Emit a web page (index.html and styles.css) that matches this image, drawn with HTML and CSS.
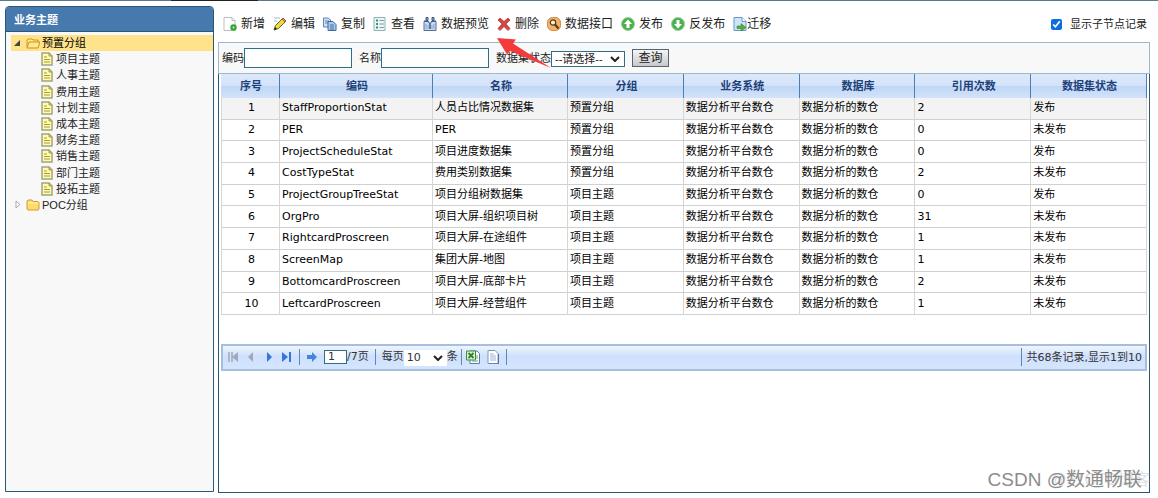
FILE: index.html
```
<!DOCTYPE html>
<html lang="zh-CN">
<head>
<meta charset="utf-8">
<title>业务主题</title>
<link rel="stylesheet" href="styles.css">
</head>
<body>
<svg class="defs" aria-hidden="true">
  <symbol id="doc" viewBox="0 0 12 14"><path d="M1 1h7l3 3v9H1z" fill="#fffbb0" stroke="#a3a47c" stroke-width="1.5"/><path d="M8 1v3h3M3 5h3M3 7.500h6M3 10h6" fill="none" stroke="#a59a3c"/></symbol>
</svg>
<div class="topline"><span></span></div>
<div class="app">
  <aside class="sidebar">
    <h1 class="side-title">业务主题</h1>
    <ul class="tree">
      <li class="node root selected"><svg class="twist" viewBox="0 0 7 7"><path d="M6 0v6H0z" fill="#444"/></svg><svg class="folder" viewBox="0 0 14 12"><path d="M1 10V3l1-1h4l1 1h5v2M1 11l2-6h11l-2 6z" fill="#ffe98c" stroke="#c9921d"/></svg><span>预置分组</span></li>
      <li class="node leaf"><svg class="doc"><use href="#doc"/></svg><span>项目主题</span></li>
      <li class="node leaf"><svg class="doc"><use href="#doc"/></svg><span>人事主题</span></li>
      <li class="node leaf"><svg class="doc"><use href="#doc"/></svg><span>费用主题</span></li>
      <li class="node leaf"><svg class="doc"><use href="#doc"/></svg><span>计划主题</span></li>
      <li class="node leaf"><svg class="doc"><use href="#doc"/></svg><span>成本主题</span></li>
      <li class="node leaf"><svg class="doc"><use href="#doc"/></svg><span>财务主题</span></li>
      <li class="node leaf"><svg class="doc"><use href="#doc"/></svg><span>销售主题</span></li>
      <li class="node leaf"><svg class="doc"><use href="#doc"/></svg><span>部门主题</span></li>
      <li class="node leaf"><svg class="doc"><use href="#doc"/></svg><span>投拓主题</span></li>
      <li class="node root"><svg class="twist" viewBox="0 0 7 7"><path d="M2 0l4 3.500-4 3.500z" fill="#fff" stroke="#aaa"/></svg><svg class="folder" viewBox="0 0 14 12"><path d="M1 10V2l1-1h4l1 1.500h5l1 1V10l-1 1H2z" fill="#ffdc6b" stroke="#d09b2b"/><path d="M2 4h10" stroke="#fff3bd"/></svg><span>POC分组</span></li>
    </ul>
  </aside>
  <main class="main">
    <div class="toolbar">
      <button class="tool"><svg viewBox="0 0 14 14"><path d="M1 .5h8l3 3v10H1z" fill="#fff" stroke="#b9bdc4"/><path d="M9 .5v3h3" fill="#eee" stroke="#b9bdc4"/><circle cx="10.500" cy="10.500" r="3.200" fill="#35a536"/><path d="M10.500 9.500v2M9.500 10.500h2" stroke="#b8f0a8"/></svg>新增</button>
      <button class="tool"><svg viewBox="0 0 14 14"><path d="M1 1h6M1 4h3" stroke="#a8bbd0"/><path d="M1 13l1.500-4.500L10 1l3 3-7.500 7.500z" fill="#e6e03a" stroke="#67651f"/><path d="M9 2l1-1 3 3-1 1z" fill="#ef8b64" stroke="#a55"/><path d="M1 13l1-3 2 2z" fill="#222"/></svg>编辑</button>
      <button class="tool"><svg viewBox="0 0 14 14"><path d="M.5 1h5l2 2v7h-7z" fill="#cfe0f6" stroke="#6485ad"/><path d="M2 4h4M2 6h4" stroke="#6485ad"/><path d="M5 4.500h5l3 3v6H5z" fill="#a9c9ef" stroke="#3f699e"/><path d="M7 8h4M7 10h4M7 12h4" stroke="#456fa4"/></svg>复制</button>
      <button class="tool"><svg viewBox="0 0 14 14"><path d="M1 .5h11v13H1z" fill="#edf6f6" stroke="#8fb2ba"/><path d="M3 3.500h2M3 7h2M3 10.500h2" stroke="#2e9b61" stroke-width="2"/><path d="M6.500 3.500H11M6.500 7H11M6.500 10.500H11" stroke="#8399ad"/></svg>查看</button>
      <button class="tool"><svg viewBox="0 0 14 14"><path d="M1 4.500h12v9H1z" fill="#c9daf2" stroke="#566c94"/><path d="M3 .5h2v3H3zM9 .5h2v3H9z" fill="#8fa5cb" stroke="#3c5687"/><path d="M1 4l4 0 2 3 2-3h4" fill="#e7f1ff" stroke="#3c5687"/><path d="M3 7v5M5 8v4M9 8v4M11 7v5" stroke="#8aa6d2"/><path d="M7 7v5" stroke="#3c5687" stroke-width="1.500"/></svg>数据预览</button>
      <button class="tool"><svg viewBox="0 0 14 14"><path d="M1 3l2-2 4 3.500L11 1l2 2-4 4 4 4.500-2 2L7 9.500 3 13.500l-2-2L5 7z" fill="#d94744" stroke="#a62929" stroke-width=".7"/></svg>删除</button>
      <button class="tool"><svg viewBox="0 0 14 14"><rect x=".5" y=".5" width="13" height="13" rx="5" fill="#f4b269" stroke="#cf8848"/><circle cx="6" cy="5.500" r="2.700" fill="#fff0d4" stroke="#583718" stroke-width="1.200"/><path d="M8 7.500l3.500 4" stroke="#583718" stroke-width="2"/></svg>数据接口</button>
      <button class="tool"><svg viewBox="0 0 14 14"><circle cx="7" cy="7" r="6.500" fill="#4caf50" stroke="#98d298"/><path d="M7 2.500L11 7H8.500v4h-3V7H3z" fill="#fff"/></svg>发布</button>
      <button class="tool"><svg viewBox="0 0 14 14"><circle cx="7" cy="7" r="6.500" fill="#4caf50" stroke="#98d298"/><path d="M7 11.500L3 7h2.500V3h3v4H11z" fill="#fff"/></svg>反发布</button>
      <button class="tool tight"><svg viewBox="0 0 14 14"><path d="M1 .5h8l4 4v9H1z" fill="#cde4fa" stroke="#6798cb"/><path d="M9 .5v4h4" fill="#fff" stroke="#6798cb"/><path d="M4 9h4V6.500l5 4-5 3.500v-2.500H4z" fill="#54ae3e" stroke="#3c8430" stroke-width=".6"/></svg>迁移</button>
      <label class="children"><input type="checkbox" checked>显示子节点记录</label>
    </div>
    <section class="content">
      <form class="search">
        <label class="field">编码<input type="text"></label>
        <label class="field">名称<input type="text"></label>
        <label class="field">数据集状态<span class="pick status"><select><option>--请选择--</option></select><svg viewBox="0 0 10 6"><path d="M1 1l4 4 4-4" fill="none" stroke="#222" stroke-width="2"/></svg></span></label>
        <button class="query" type="button">查询</button>
        <svg class="pointer" viewBox="0 0 54 32" aria-hidden="true"><path d="M0 1L19 2.500l-3 4L54 31 13 14l-3 3.500z" fill="#f43b3b"/></svg>
      </form>
      <div class="grid">
        <table>
          <colgroup><col class="c-no"><col class="c-code"><col class="c-name"><col><col><col><col><col></colgroup>
          <thead><tr><th>序号</th><th>编码</th><th>名称</th><th>分组</th><th>业务系统</th><th>数据库</th><th>引用次数</th><th>数据集状态</th></tr></thead>
          <tbody>
            <tr class="hover"><td>1</td><td>StaffProportionStat</td><td>人员占比情况数据集</td><td>预置分组</td><td>数据分析平台数仓</td><td>数据分析的数仓</td><td>2</td><td>发布</td></tr>
            <tr><td>2</td><td>PER</td><td>PER</td><td>预置分组</td><td>数据分析平台数仓</td><td>数据分析的数仓</td><td>0</td><td>未发布</td></tr>
            <tr><td>3</td><td>ProjectScheduleStat</td><td>项目进度数据集</td><td>预置分组</td><td>数据分析平台数仓</td><td>数据分析的数仓</td><td>0</td><td>发布</td></tr>
            <tr><td>4</td><td>CostTypeStat</td><td>费用类别数据集</td><td>预置分组</td><td>数据分析平台数仓</td><td>数据分析的数仓</td><td>2</td><td>未发布</td></tr>
            <tr><td>5</td><td>ProjectGroupTreeStat</td><td>项目分组树数据集</td><td>项目主题</td><td>数据分析平台数仓</td><td>数据分析的数仓</td><td>0</td><td>发布</td></tr>
            <tr><td>6</td><td>OrgPro</td><td>项目大屏-组织项目树</td><td>项目主题</td><td>数据分析平台数仓</td><td>数据分析的数仓</td><td>31</td><td>未发布</td></tr>
            <tr><td>7</td><td>RightcardProscreen</td><td>项目大屏-在途组件</td><td>项目主题</td><td>数据分析平台数仓</td><td>数据分析的数仓</td><td>1</td><td>未发布</td></tr>
            <tr><td>8</td><td>ScreenMap</td><td>集团大屏-地图</td><td>项目主题</td><td>数据分析平台数仓</td><td>数据分析的数仓</td><td>1</td><td>未发布</td></tr>
            <tr><td>9</td><td>BottomcardProscreen</td><td>项目大屏-底部卡片</td><td>项目主题</td><td>数据分析平台数仓</td><td>数据分析的数仓</td><td>2</td><td>未发布</td></tr>
            <tr><td>10</td><td>LeftcardProscreen</td><td>项目大屏-经营组件</td><td>项目主题</td><td>数据分析平台数仓</td><td>数据分析的数仓</td><td>1</td><td>未发布</td></tr>
          </tbody>
        </table>
        <div class="pager">
          <button class="nav" aria-label="首页"><svg viewBox="0 0 12 12"><path d="M2 1v10M5 1v10" stroke="#a3a8b8" stroke-width="1.500"/><path d="M11 1v10L5 6z" fill="#a3a8b8"/></svg></button>
          <button class="nav" aria-label="上一页"><svg viewBox="0 0 12 12"><path d="M8 1v10L3 6z" fill="#a3a8b8"/></svg></button>
          <button class="nav" aria-label="下一页"><svg viewBox="0 0 12 12"><path d="M4 1v10l5-5z" fill="#3775d6"/></svg></button>
          <button class="nav" aria-label="末页"><svg viewBox="0 0 12 12"><path d="M1 1v10l6-5z" fill="#3775d6"/><path d="M9 1v10" stroke="#3775d6" stroke-width="2"/></svg></button>
          <i class="sep"></i>
          <button class="nav go" aria-label="跳转"><svg viewBox="0 0 12 12"><path d="M1 4h5V1l5 5-5 5V8H1z" fill="#4385dc"/></svg></button>
          <label class="page"><input type="text" value="1" aria-label="页码">/7页</label>
          <i class="sep"></i>
          <label class="size">每页<span class="pick"><select aria-label="每页条数"><option>10</option></select><svg viewBox="0 0 10 6"><path d="M1 1l4 4 4-4" fill="none" stroke="#222" stroke-width="2"/></svg></span>条</label>
          <i class="sep"></i>
          <button class="nav export" aria-label="导出Excel"><svg viewBox="0 0 14 14"><path d="M4 1h7l2.500 2.500v10H4z" fill="#fff" stroke="#577faf"/><path d="M9 6h3M9 8h3M6 11h6" stroke="#7ca27c"/><path d="M.5 1h9v9h-9z" fill="#dff0d4" stroke="#3d8b3d"/><path d="M2.500 3l5 5M7.500 3l-5 5" stroke="#2c8230" stroke-width="1.800"/></svg></button>
          <button class="nav export" aria-label="导出文本"><svg viewBox="0 0 14 14"><path d="M2 .5h7l3 3v10H2z" fill="#fff" stroke="#7c96c0"/><path d="M4 4h4M4 6h6M4 8h6M4 10h6" stroke="#9eb2d3"/><path d="M12.500 4v10H3" fill="none" stroke="#56729e"/></svg></button>
          <i class="sep"></i>
          <span class="total">共68条记录,显示1到10</span>
        </div>
      </div>
    </section>
  </main>
</div>
<div class="mark ghost">@51CTO博客</div>
<div class="mark">CSDN @数通畅联</div>
</body>
</html>
```
FILE: styles.css
```
* { box-sizing: border-box; }
body {
  margin: 0;
  height: 100vh;
  display: flex;
  flex-direction: column;
  background: #fff;
  color: #222;
  font: 11px/16px "DejaVu Sans", "Noto Sans CJK SC", sans-serif;
}
button, input, select { font: inherit; color: inherit; margin: 0; }
button { background: none; border: 0; padding: 0; }
svg { display: block; flex: none; }
.defs { position: absolute; width: 0; height: 0; }

.topline { height: 1px; background: #567b8d; display: flex; justify-content: center; flex: none; }
.topline span { margin-right: 63%; width: 87px; background: #222; }
.app { flex: 1; min-height: 0; display: flex; gap: 4px; padding: 5px 8px 5px 5px; }

.sidebar { width: 209px; flex: none; background: #f8f8f8; border: 1px solid #2c5873; border-radius: 4px 4px 0 0; margin-bottom: 1px; }
.side-title { margin: 0; height: 25px; padding: 2px 8px 0; background: #4679ad; border-bottom: 1px solid #2c5873; border-radius: 3px 3px 0 0; color: #fff; font: bold 11px/22px "Liberation Sans", "Noto Sans CJK SC", sans-serif; }
.tree { list-style: none; margin: 3px 0 0 5px; padding: 0; height: 178px; display: grid; grid-auto-rows: 1fr; font-family: "Liberation Sans", "Noto Sans CJK SC", sans-serif; }
.node { display: flex; align-items: center; gap: 2px; line-height: 16px; }
.root { padding-left: 3px; }
.leaf { padding-left: 30px; gap: 3px; }
.selected { background: #ffe38b; color: #000; }
.twist { width: 7px; height: 7px; margin-right: 3px; }
.folder { width: 14px; height: 12px; }
.doc { width: 12px; height: 14px; }

.main { flex: 1; min-width: 0; display: flex; flex-direction: column; }
.toolbar { height: 36px; flex: none; display: flex; align-items: center; gap: 8px; padding: 0 3px 0 5px; font-family: "Liberation Sans", "Noto Sans CJK SC", sans-serif; }
.tool { display: flex; align-items: center; gap: 4px; font-size: 12px; }
.tool svg { width: 14px; height: 14px; }
.tight { gap: 0; }
.children { margin-left: auto; display: flex; align-items: center; gap: 8px; }
.children input { width: 11px; height: 11px; accent-color: #0b6ee0; }

.content { flex: 1; border: 1px solid #2c5873; border-top: 0; }
.search { position: relative; height: 32px; margin: 0 -1px; display: flex; align-items: center; gap: 7px; padding: 0 3px; background: #f8f8f8; border: 1px solid #9db8d0; font-family: "Liberation Sans", "Noto Sans CJK SC", sans-serif; }
.field { display: flex; align-items: center; }
.field input { width: 108px; height: 20px; border: 1px solid #2c6f86; background: #fff; padding: 0 4px; }
.pick { display: inline-flex; align-items: center; background: #fff; }
.pick select { appearance: none; border: 0; background: transparent; padding: 0 0 0 3px; outline: 0; }
.pick svg { width: 10px; height: 6px; }
.status { width: 74px; height: 16px; border: 1px solid #2c6f86; padding-right: 4px; margin-top: 2px; }
.status select { flex: 1; min-width: 0; height: 14px; line-height: 14px; }
.query { width: 37px; height: 18px; line-height: 15px; border: 1px solid #566473; background: linear-gradient(#f5f5f5, #c8c8cc); font-size: 12px; }
.pointer { position: absolute; left: 278px; top: -6px; width: 54px; height: 32px; }

.grid { padding: 0 2px; }
table { width: 100%; height: 241px; table-layout: fixed; border-collapse: separate; border-spacing: 0; color: #000; }
.c-no { width: 59px; }
.c-code { width: 153px; }
.c-name { width: 135px; }
th { height: 24px; padding: 2px 0 0 2px; border-right: 1px solid #4a7fb5; background: linear-gradient(#dce9fa, #d3e3f9 50%, #bfd7f6 52%, #d3e3fa); color: #1d4178; font-weight: bold; }
td { padding: 0 2px; border-right: 1px solid #d6d6d6; border-bottom: 1px solid #d0d0d0; white-space: nowrap; line-height: 16px; }
td:first-child { padding-left: 4px; text-align: center; border-left: 1px solid #d6d6d6; }
.hover td { background: #f3f3f3; }

.pager { margin-top: 29px; height: 27px; display: flex; align-items: center; gap: 6px; padding: 0 3px 2px 4px; border: 2px solid #a9bddc; background: linear-gradient(#eef5ff, #cfe0fd 45%, #d5e5ff); color: #333; }
.nav svg { width: 12px; height: 12px; }
.export svg { width: 14px; height: 14px; }
.size + .sep { margin-left: -3px; }
.sep + .export { margin-left: -2px; }
.sep { width: 1px; height: 16px; background: #5e88ae; }
.page, .size { display: flex; align-items: center; }
.page input { width: 23px; height: 14px; border: 1px solid #2c6f86; background: #fff; padding: 0 3px; }
.size .pick { width: 43px; height: 16px; padding-right: 4px; margin-top: 2px; }
.size select { flex: 1; min-width: 0; height: 16px; }
.total { margin-left: auto; border-left: 1px solid #5e88ae; padding: 2px 0 0 5px; }

.mark { position: absolute; right: 16px; bottom: 5px; color: #8c8c8c; font: 19px/26px "Liberation Sans", "Noto Sans CJK SC", sans-serif; }
.ghost { right: 8px; color: #e0e0e0; font-size: 16px; }
```
